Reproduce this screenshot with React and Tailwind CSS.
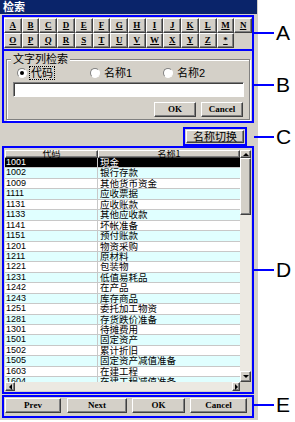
const raised = 'border border-t-white border-l-white border-r-[#404040] border-b-[#404040] shadow-[inset_-1px_-1px_0_#808080] bg-[#d4d0c8]'
const sunken = 'border border-t-[#808080] border-l-[#808080] border-r-white border-b-white shadow-[inset_1px_1px_0_#404040]'
const btnFont = { fontFamily: '"Liberation Serif", serif' }
const cjk = '"Liberation Sans", "Noto Sans CJK SC", sans-serif'
const cjkOnly = { fontFamily: '"Noto Sans CJK SC", sans-serif' }

const row1 = ['A', 'B', 'C', 'D', 'E', 'F', 'G', 'H', 'I', 'J', 'K', 'L', 'M', 'N']
const row2 = ['O', 'P', 'Q', 'R', 'S', 'T', 'U', 'V', 'W', 'X', 'Y', 'Z', '*']

const rows = [
  ['1001', '現金'],
  ['1002', '银行存款'],
  ['1009', '其他货币资金'],
  ['1111', '应收票据'],
  ['1131', '应收账款'],
  ['1133', '其他应收款'],
  ['1141', '坏帐准备'],
  ['1151', '预付账款'],
  ['1201', '物资采购'],
  ['1211', '原材料'],
  ['1221', '包装物'],
  ['1231', '低值易耗品'],
  ['1242', '在产品'],
  ['1243', '库存商品'],
  ['1251', '委托加工物资'],
  ['1281', '存货跌价准备'],
  ['1301', '待摊费用'],
  ['1501', '固定资产'],
  ['1502', '累计折旧'],
  ['1505', '固定资产减值准备'],
  ['1603', '在建工程'],
  ['1604', '在建工程减值准备'],
]

function LetterBtn({ ch }) {
  return (
    <div className={`${raised} h-[15px] flex items-center justify-center text-[9px] font-bold underline text-black`} style={btnFont}>
      {ch}
    </div>
  )
}

function Radio({ checked, label, focus }) {
  return (
    <div className="w-[73px] flex items-center gap-[3px]">
      <div className="w-[10px] h-[10px] rounded-full bg-white border border-t-[#808080] border-l-[#808080] border-r-white border-b-white flex items-center justify-center">
        {checked && <div className="w-[4px] h-[4px] rounded-full bg-black" />}
      </div>
      <span className={`text-[11px] leading-[12px] px-[1px] ${focus ? 'outline outline-1 outline-dotted outline-black' : ''}`}>{label}</span>
    </div>
  )
}

function Label({ top, ch }) {
  return (
    <>
      <div className="absolute left-[254px] w-[20px] h-[2px] bg-[#0000ff]" style={{ top }} />
      <div className="absolute left-[276px] text-[21px] leading-[21px] text-black" style={{ top: top - 10, fontFamily: '"Liberation Sans", sans-serif' }}>{ch}</div>
    </>
  )
}

export default function App() {
  return (
    <div className="relative w-[295px] h-[422px] bg-white overflow-hidden" style={{ fontFamily: cjk }}>
      <div className="w-[258px] h-[420px] bg-[#d4d0c8] flex flex-col">
        <div className="w-[257px] h-[14px] bg-[#0a246a] text-white font-bold text-[11px] leading-[14px] pl-[3px]">检索</div>

        {/* A */}
        <div className="mt-[1px] ml-[2px] w-[252px] h-[36px] border-2 border-[#0000ff] pt-[1px]">
          <div className="grid grid-cols-14">
            {row1.map(c => <LetterBtn key={c} ch={c} />)}
            {row2.map(c => <LetterBtn key={c} ch={c} />)}
          </div>
        </div>

        {/* B */}
        <div className="ml-[2px] w-[252px] h-[72px] border-2 border-t-0 border-[#0000ff]">
          <div className="relative mt-[8px] ml-[2px] w-[244px] h-[61px] border border-[#808080] shadow-[1px_1px_0_white,inset_1px_1px_0_white]">
            <div className="absolute -top-[8px] left-[4px] bg-[#d4d0c8] px-[2px] text-[11px] leading-[14px] text-black">文字列检索</div>
            <div className="flex pl-[10px] pt-[7px]">
              <Radio checked label="代码" focus />
              <Radio label="名称1" />
              <Radio label="名称2" />
            </div>
            <div className={`${sunken} bg-white ml-[6px] mt-[3px] w-[231px] h-[15px]`} />
            <div className="flex justify-end gap-[5px] pr-[6px] mt-[5px]">
              <div className={`${raised} w-[42px] h-[15px] flex items-center justify-center text-[9px] font-bold`} style={btnFont}>OK</div>
              <div className={`${raised} w-[42px] h-[15px] flex items-center justify-center text-[9px] font-bold`} style={btnFont}>Cancel</div>
            </div>
          </div>
        </div>

        {/* C */}
        <div className="mt-[4px] ml-[183px] w-[64px] h-[19px] border-2 border-[#0000ff] p-[1px]">
          <div className={`${raised} h-full flex items-center justify-center text-[11px] leading-[12px]`}>名称切换</div>
        </div>

        {/* D */}
        <div className="ml-[2px] w-[252px] h-[248px] border-2 border-[#0000ff] pt-[2px] pl-[1px]">
          <div className="w-[246px] h-[241px] flex flex-col bg-white">
            <div className="flex h-[232px]">
              <div className="w-[235px] flex flex-col overflow-hidden">
                <div className="flex h-[8px] overflow-hidden shrink-0 text-[9px] leading-[6px] text-black">
                  <div className={`${raised} w-[93px] text-center`} style={cjkOnly}>代码</div>
                  <div className={`${raised} flex-1 text-center`} style={cjkOnly}>名称1</div>
                </div>
                {rows.map(([code, name], i) => {
                  const sel = i === 0
                  const bg = sel ? 'bg-black text-white' : i % 2 === 1 ? 'bg-[#e0ffff] text-black' : 'bg-white text-black'
                  return (
                    <div key={code} className={`flex h-[10.45px] shrink-0 border-b border-[#c8c8c8] ${bg}`}>
                      <div className="w-[93px] pl-[1px] text-[9px] leading-[9.45px] border-r border-[#c8c8c8]">{code}</div>
                      <div className="flex-1 pl-[2px] text-[9.5px] leading-[8.4px] whitespace-nowrap" style={cjkOnly}>{name}</div>
                    </div>
                  )
                })}
              </div>
              <div className="w-[11px] bg-[#ece9e2] flex flex-col">
                <div className={`${raised} h-[8px] flex items-center justify-center`}>
                  <div className="w-0 h-0 border-l-[3px] border-r-[3px] border-b-[3px] border-l-transparent border-r-transparent border-b-black" />
                </div>
                <div className={`${raised} h-[57px]`} />
                <div className="flex-1" />
                <div className={`${raised} h-[11px] flex items-center justify-center`}>
                  <div className="w-0 h-0 border-l-[3px] border-r-[3px] border-t-[3px] border-l-transparent border-r-transparent border-t-black" />
                </div>
              </div>
            </div>
            <div className="flex h-[9px]">
              <div className="w-[235px] bg-[#ece9e2] flex">
                <div className={`${raised} w-[10px] flex items-center justify-center`}>
                  <div className="w-0 h-0 border-t-[3px] border-b-[3px] border-r-[3px] border-t-transparent border-b-transparent border-r-black" />
                </div>
                <div className="flex-1" />
                <div className={`${raised} w-[8px] flex items-center justify-center`}>
                  <div className="w-0 h-0 border-t-[3px] border-b-[3px] border-l-[3px] border-t-transparent border-b-transparent border-l-black" />
                </div>
              </div>
              <div className="w-[11px] bg-[#d4d0c8]" />
            </div>
          </div>
        </div>

        {/* E */}
        <div className="mt-[1px] ml-[2px] w-[252px] h-[23px] border-2 border-[#0000ff] pt-[1px] flex">
          <div className={`${raised} ml-[1px] w-[56px] h-[15px] flex items-center justify-center text-[9px] font-bold`} style={btnFont}>Prev</div>
          <div className={`${raised} ml-[6px] w-[60px] h-[15px] flex items-center justify-center text-[9px] font-bold`} style={btnFont}>Next</div>
          <div className={`${raised} ml-[5px] w-[53px] h-[15px] flex items-center justify-center text-[9px] font-bold`} style={btnFont}>OK</div>
          <div className={`${raised} ml-[5px] w-[57px] h-[15px] flex items-center justify-center text-[9px] font-bold`} style={btnFont}>Cancel</div>
        </div>
      </div>

      <Label top={32} ch="A" />
      <Label top={84} ch="B" />
      <Label top={136} ch="C" />
      <Label top={269} ch="D" />
      <Label top={404} ch="E" />
    </div>
  )
}
